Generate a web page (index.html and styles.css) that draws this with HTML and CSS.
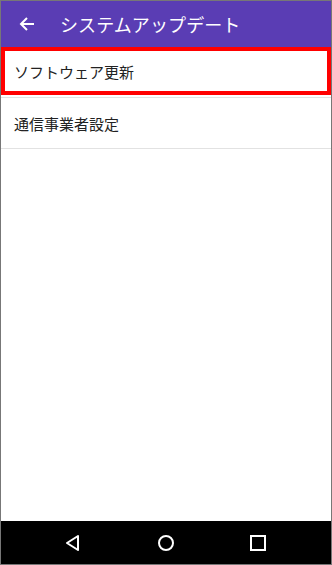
FILE: index.html
```html
<!DOCTYPE html>
<html lang="ja">
<head>
<meta charset="utf-8">
<link rel="stylesheet" href="styles.css">
</head>
<body>
<div class="screen">
  <header class="appbar">
    <svg class="back" width="16" height="16" viewBox="0 0 16 16">
      <path d="M15 8H2M8 2L2 8l6 6" fill="none" stroke="#fff" stroke-width="2"/>
    </svg>
    <h1 class="title">システムアップデート</h1>
  </header>
  <ul class="list">
    <li class="item item-selected">ソフトウェア更新</li>
    <li class="item">通信事業者設定</li>
  </ul>
  <div class="spacer"></div>
  <nav class="navbar">
    <svg width="18" height="18" viewBox="0 0 18 18"><path d="M14 2L3 9l11 7z" fill="none" stroke="#fff" stroke-width="2" stroke-linejoin="round"/></svg>
    <svg width="18" height="18" viewBox="0 0 18 18"><circle cx="9" cy="9" r="7" fill="none" stroke="#fff" stroke-width="2"/></svg>
    <svg width="18" height="18" viewBox="0 0 18 18"><rect x="2" y="2" width="14" height="14" fill="none" stroke="#fff" stroke-width="2"/></svg>
  </nav>
</div>
</body>
</html>
```
FILE: styles.css
```css
* { box-sizing: border-box; }
html, body { margin: 0; padding: 0; background: #fff; }
body {
  font-family: Roboto, "Noto Sans CJK JP", sans-serif;
}
.screen {
  width: 332px;
  height: 565px;
  border: 1px solid #777;
  display: flex;
  flex-direction: column;
  background: #fff;
}
.appbar {
  height: 46px;
  background: #5a3db4;
  display: flex;
  align-items: center;
  padding-left: 18px;
  flex-shrink: 0;
}
.back { flex-shrink: 0; }
.title {
  margin: 0 0 0 25px;
  font-size: 18px;
  font-weight: 400;
  color: #fff;
  letter-spacing: 0.1px;
}
.list {
  list-style: none;
  margin: 0;
  padding: 0;
}
.item {
  height: 51px;
  display: flex;
  align-items: center;
  padding-left: 13px;
  font-size: 15px;
  color: #222;
  border-bottom: 1px solid #e2e2e2;
}
.item-selected {
  height: 48px;
  margin-bottom: 3px;
  padding-left: 9px;
  border: 4px solid #f00;
  position: relative;
}
.item-selected::after {
  content: "";
  position: absolute;
  left: -4px;
  right: -4px;
  bottom: -7px;
  height: 1px;
  background: #e2e2e2;
}
.spacer { flex: 1; }
.navbar {
  height: 43px;
  background: #000;
  display: flex;
  justify-content: space-between;
  align-items: center;
  padding: 0 64px 0 63px;
  flex-shrink: 0;
}
.navbar svg { display: block; }
```
